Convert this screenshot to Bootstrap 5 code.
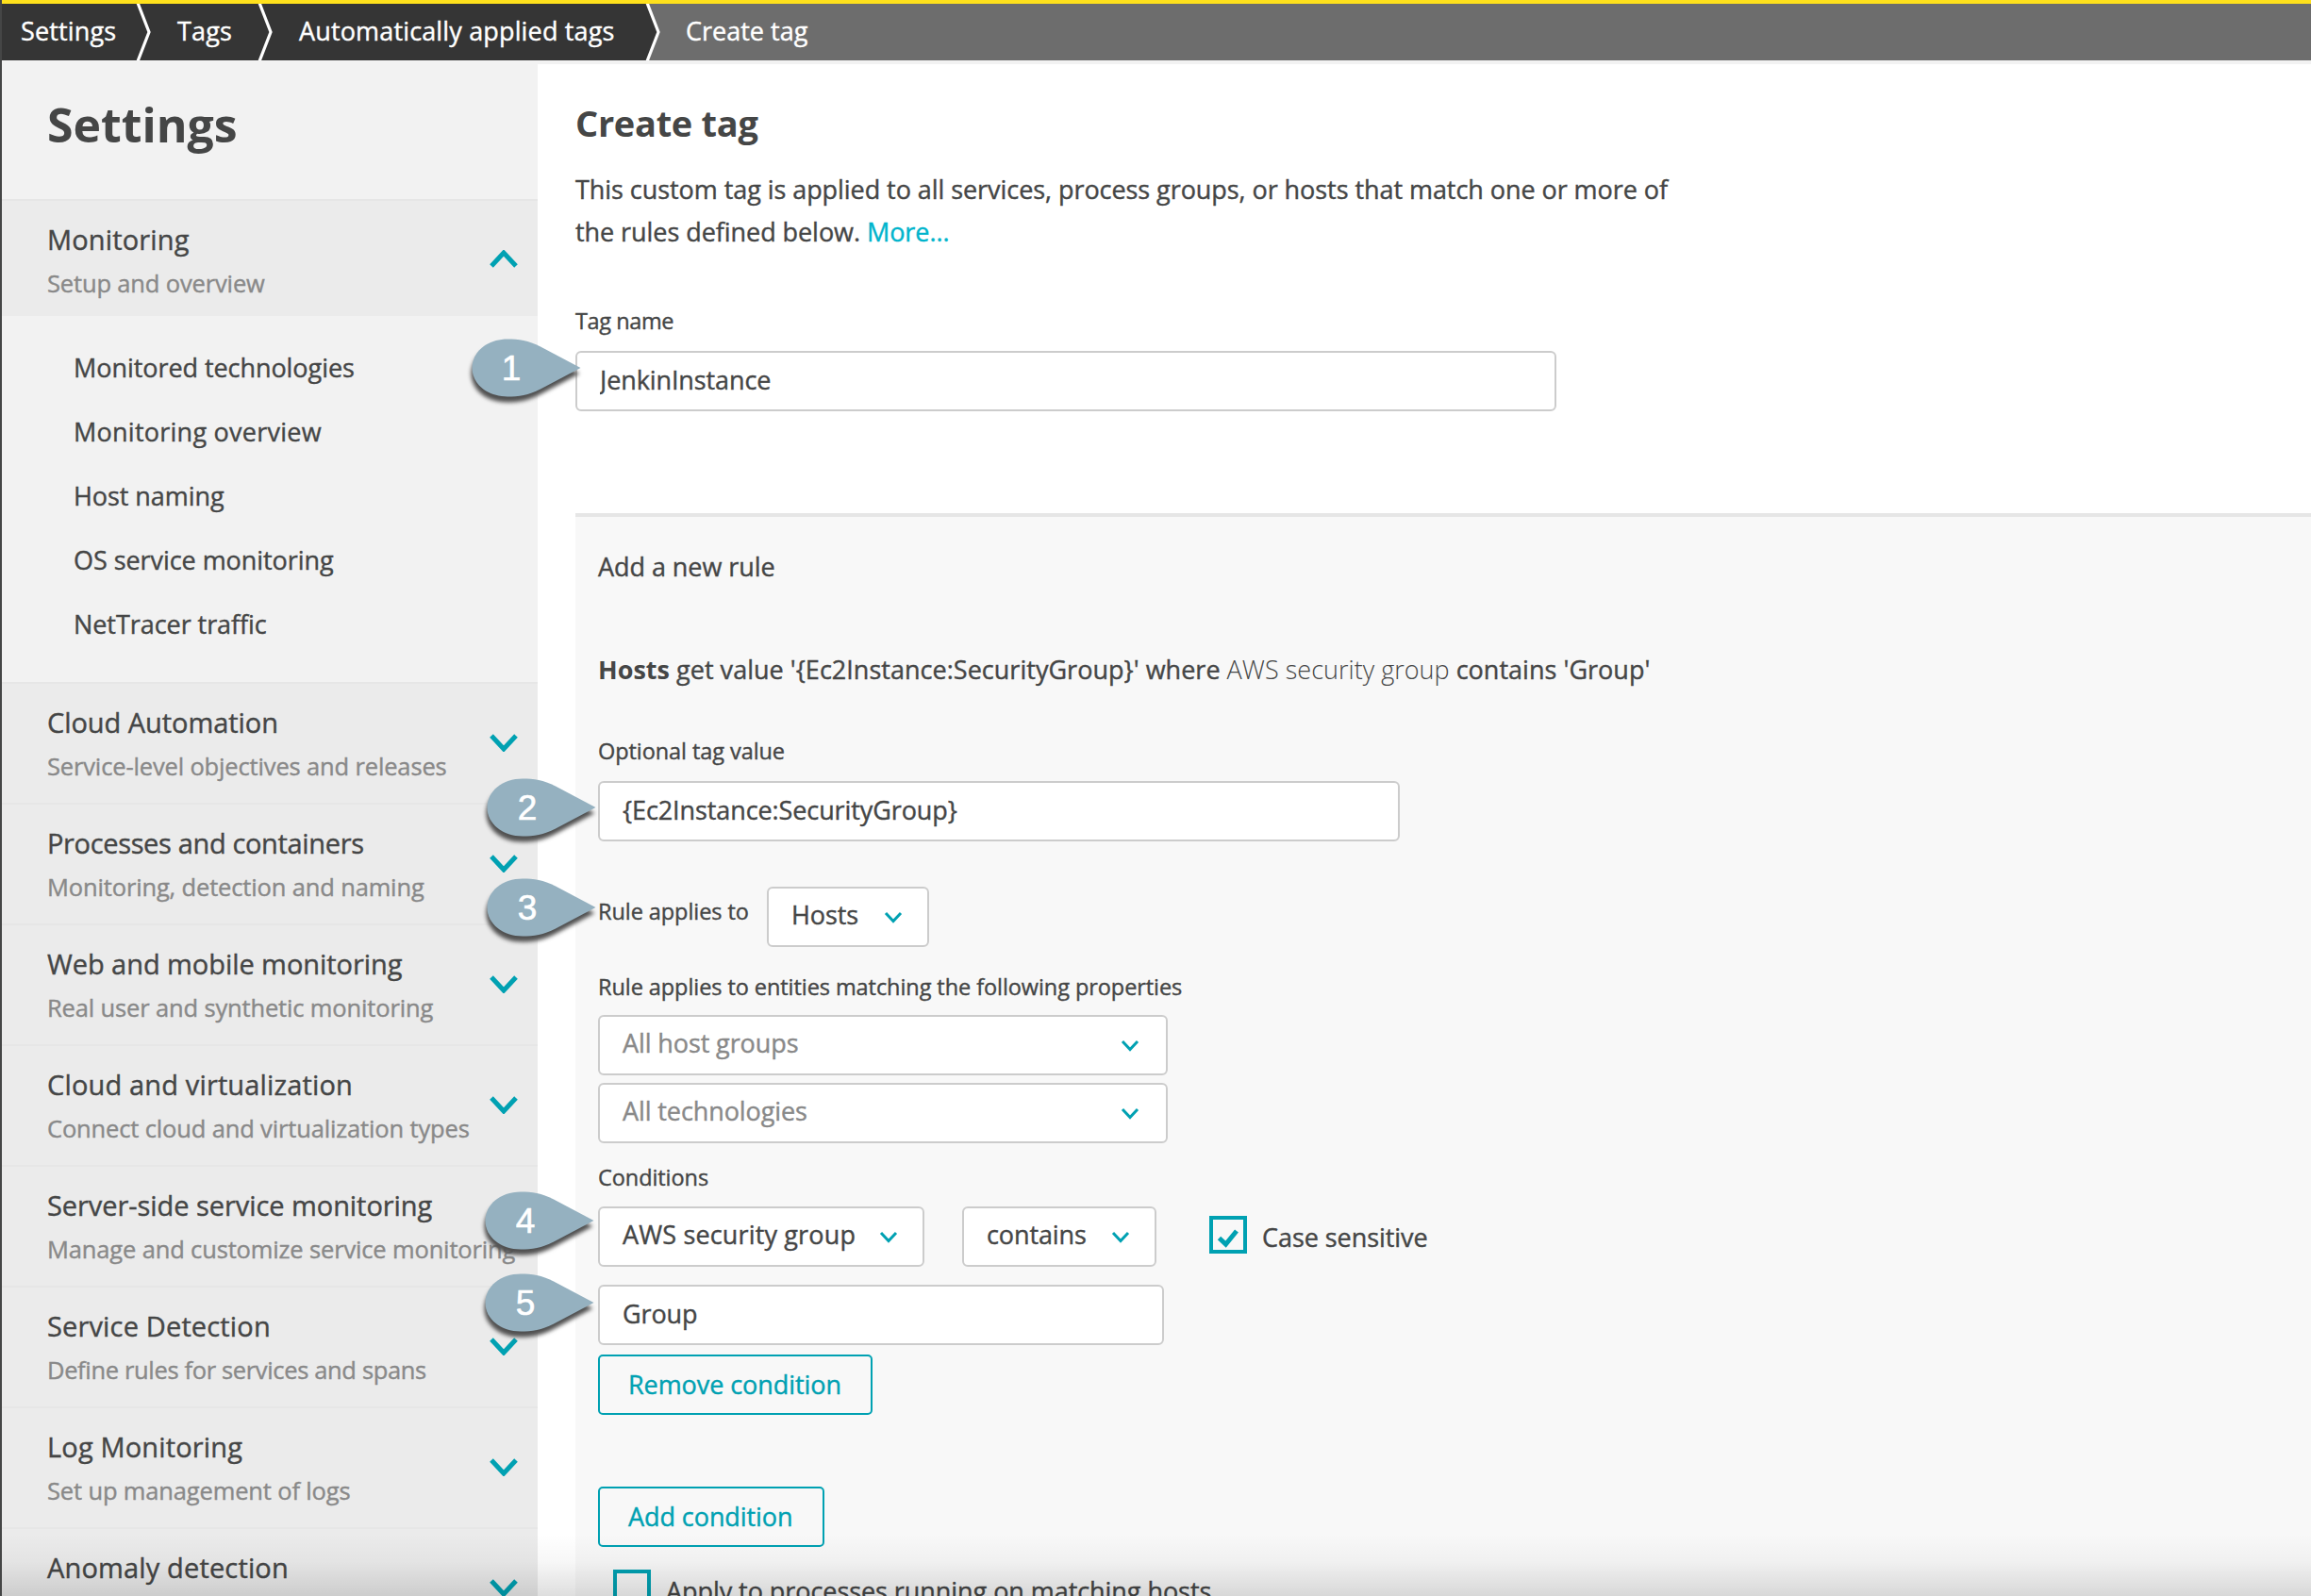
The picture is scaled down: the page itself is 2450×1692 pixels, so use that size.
<!DOCTYPE html>
<html lang="en">
<head>
<meta charset="utf-8">
<title>Create tag - Settings</title>
<link rel="stylesheet" href="https://cdn.jsdelivr.net/npm/bootstrap@5.3.0/dist/css/bootstrap.min.css">
<style>
:root{--ink:#454646;--soft:#898989;--teal:#00a1b2}
body{font-family:"Open Sans",sans-serif;font-size:27px;line-height:45px;letter-spacing:-.06px;color:var(--ink);background:#fff;height:1692px;overflow:hidden;-webkit-text-stroke:.4px}
h1,h2,strong,.fw-light{-webkit-text-stroke:0}
.app{height:1692px;border-left:2px solid #454646;position:relative;overflow:hidden}
.crumbs{height:64px;border-top:4px solid #ffe11c;background:#6d6d6d;color:#fff;line-height:57px;letter-spacing:.15px}
.crumbs a{color:#fff;background:#353535;text-decoration:none;height:60px;white-space:nowrap}
.crumbs svg{width:16px;height:60px;flex:none;display:block}
.c1{width:142px;padding-left:20px}.c2{width:113px;padding-left:28px}.c3{width:395px;padding-left:28px}
.c4{padding-left:27px;letter-spacing:0}
.strip{height:4px;background:#f2f2f2}
.side{width:568px;background:#f2f2f2;flex:none}
.side h1{font-size:50px;font-weight:700;line-height:60px;letter-spacing:0;margin:0;padding:34px 0 49px 48px}
.sec{height:128px;background:#ebebeb;border-top:2px solid #e6e6e6;padding:18px 21px 0 48px;white-space:nowrap}
.sec.open{height:124px}
.sec .ttl{font-size:29px;line-height:45px}
.sec .sub{font-size:25.5px;line-height:48px;letter-spacing:-.15px;color:var(--soft)}
.sec svg{width:30px;height:20px;margin-top:34px;flex:none}
.sec .txt{width:0;flex:1}
.sec .narrow{letter-spacing:-.35px}
.wide{letter-spacing:.15px}
.chev{fill:none;stroke:var(--teal)}
.subnav{padding:21px 0 27px 76px;margin:0;list-style:none}
.subnav li{line-height:68px}
.subnav .wider{letter-spacing:.25px}
.main{padding-left:40px;flex:1;min-width:0}
.main h2{font-size:38px;font-weight:700;line-height:50px;letter-spacing:-.3px;margin:37px 0 0}
.intro{width:1200px;margin:23px 0 56px}
.intro a{color:#00b4cc;text-decoration:none}
.lbl{font-size:23.5px;line-height:32px;letter-spacing:-.07px;margin:0;display:block;white-space:nowrap}
.lbl.tight{letter-spacing:-.4px}
.box,.box:focus{height:64px;border:2px solid #ccc;border-radius:6px;background:#fff;color:var(--ink);font-size:27px;padding:0 26px 4px 24px;letter-spacing:-.1px;line-height:56px;box-shadow:none}
.box.faded{color:var(--soft);padding-right:28px;width:604px}
.box svg{width:20px;height:14px;flex:none;margin-top:4px}
.box-name{width:1040px;margin-top:16px}
.box-value{width:850px;margin-top:16px}
.box-group{width:600px;margin-top:19px}
.box-hosts{width:172px}
.box-attr{width:346px}
.box-op{width:206px;margin-left:40px}
.rule{margin-top:108px;border-top:4px solid #e6e6e6;background:#f8f8f8;padding:30px 0 0 24px;height:1148px}
.rule p{margin:0;white-space:nowrap}
.rule .summary{padding-top:64px;letter-spacing:.02px}
.lbl-value{margin-top:48px}
.applies{margin-top:48px}
.applies .lbl{width:179px;padding-top:10px}
.lbl-match{margin:26px 0 14px}
.lbl-cond{margin:20px 0 15px}
.act{height:64px;border:2px solid var(--teal);border-radius:5px;color:var(--teal);font-size:27px;line-height:60px;padding:0 0 0 30px;text-align:left;letter-spacing:-.07px}
.act-remove{width:291px;margin-top:10px}
.act-add{width:240px;margin-top:76px}
.tick{width:40px;height:40px;border:4px solid var(--teal);flex:none;margin-right:16px}
.tick svg{display:block;width:32px;height:32px}
.case{margin-left:56px;padding-top:10px}
.apply{margin:24px 0 0 16px}
.pin{position:absolute;width:120px;height:72px;overflow:visible}
.pin use{fill:#95b1c0;filter:drop-shadow(-1px 6px 2px #505050)}
.pin text{fill:#fff;stroke:#fff;stroke-width:.6px;-webkit-text-stroke:0;font:37px "Liberation Sans",sans-serif;text-anchor:middle;letter-spacing:0}
.pin-1{left:498px;top:359px}.pin-2{left:514px;top:825px}.pin-3{left:514px;top:931px}.pin-4{left:512px;top:1263px}.pin-5{left:512px;top:1350px}
.fade-end{position:absolute;left:0;right:0;bottom:0;height:66px;background:linear-gradient(rgba(0,0,0,0),rgba(0,0,0,.03) 45%,rgba(0,0,0,.13));pointer-events:none}
</style>
</head>
<body>
<svg width="0" height="0" class="position-absolute">
<symbol id="down" viewBox="0 0 30 20"><path d="M2 3L15 17L28 3" stroke-width="5"/></symbol>
<symbol id="up" viewBox="0 0 30 20"><path d="M2 17L15 3L28 17" stroke-width="5"/></symbol>
<symbol id="small" viewBox="0 0 20 14"><path d="M2 3L10 11.5L18 3" stroke-width="3"/></symbol>
<symbol id="drop" viewBox="0 0 116 62"><path d="M115.500 31L73 8.500C60 2 50 0.500 38 0.500C17 0.500 0.500 13.500 0.500 31S17 61.500 38 61.500C50 61.500 60 60 73 53.500Z"/></symbol>
</svg>
<div class="app">
  <nav class="crumbs d-flex" aria-label="breadcrumb">
    <a href="#" class="c1">Settings</a>
    <svg viewBox="0 0 16 60"><path fill="#353535" d="M0 0h16v60H0z"/><path d="M2 -1L14 30L2 61" fill="none" stroke="#fff" stroke-width="3.2"/></svg>
    <a href="#" class="c2">Tags</a>
    <svg viewBox="0 0 16 60"><path fill="#353535" d="M0 0h16v60H0z"/><path d="M2 -1L14 30L2 61" fill="none" stroke="#fff" stroke-width="3.2"/></svg>
    <a href="#" class="c3">Automatically applied tags</a>
    <svg viewBox="0 0 16 60"><path fill="#353535" d="M0 0h2L14 30L2 60H0z"/><path d="M2 -1L14 30L2 61" fill="none" stroke="#fff" stroke-width="3.2"/></svg>
    <span class="c4">Create tag</span>
  </nav>
  <div class="strip"></div>
  <div class="d-flex">
    <aside class="side">
      <h1>Settings</h1>
      <div class="sec open d-flex"><div class="txt"><div class="ttl wide">Monitoring</div><div class="sub">Setup and overview</div></div><svg class="chev"><use href="#up"/></svg></div>
      <ul class="subnav">
        <li>Monitored technologies</li><li class="wider">Monitoring overview</li><li>Host naming</li><li>OS service monitoring</li><li>NetTracer traffic</li>
      </ul>
      <div class="sec d-flex"><div class="txt"><div class="ttl">Cloud Automation</div><div class="sub">Service-level objectives and releases</div></div><svg class="chev"><use href="#down"/></svg></div>
      <div class="sec d-flex"><div class="txt"><div class="ttl narrow">Processes and containers</div><div class="sub">Monitoring, detection and naming</div></div><svg class="chev"><use href="#down"/></svg></div>
      <div class="sec d-flex"><div class="txt"><div class="ttl">Web and mobile monitoring</div><div class="sub">Real user and synthetic monitoring</div></div><svg class="chev"><use href="#down"/></svg></div>
      <div class="sec d-flex"><div class="txt"><div class="ttl wide">Cloud and virtualization</div><div class="sub">Connect cloud and virtualization types</div></div><svg class="chev"><use href="#down"/></svg></div>
      <div class="sec d-flex"><div class="txt"><div class="ttl">Server-side service monitoring</div><div class="sub">Manage and customize service monitoring</div></div></div>
      <div class="sec d-flex"><div class="txt"><div class="ttl wide">Service Detection</div><div class="sub narrow">Define rules for services and spans</div></div><svg class="chev"><use href="#down"/></svg></div>
      <div class="sec d-flex"><div class="txt"><div class="ttl wide">Log Monitoring</div><div class="sub">Set up management of logs</div></div><svg class="chev"><use href="#down"/></svg></div>
      <div class="sec d-flex"><div class="txt"><div class="ttl wide">Anomaly detection</div></div><svg class="chev"><use href="#down"/></svg></div>
    </aside>
    <main class="main">
      <h2>Create tag</h2>
      <p class="intro">This custom tag is applied to all services, process groups, or hosts that match one or more of<br>the rules defined below. <a href="#">More...</a></p>
      <label class="lbl tight" for="tag">Tag name</label>
      <input id="tag" class="form-control box box-name" value="JenkinInstance">
      <section class="rule">
        <p>Add a new rule</p>
        <p class="summary"><strong>Hosts</strong> get value '{Ec2Instance:SecurityGroup}' where <span class="fw-light">AWS security group</span> contains 'Group'</p>
        <label class="lbl lbl-value" for="val">Optional tag value</label>
        <input id="val" class="form-control box box-value" value="{Ec2Instance:SecurityGroup}">
        <div class="applies d-flex">
          <label class="lbl">Rule applies to</label>
          <div class="box box-hosts d-flex justify-content-between align-items-center">Hosts<svg class="chev"><use href="#small"/></svg></div>
        </div>
        <label class="lbl lbl-match">Rule applies to entities matching the following properties</label>
        <div class="box faded d-flex justify-content-between align-items-center">All host groups<svg class="chev"><use href="#small"/></svg></div>
        <div class="box faded d-flex justify-content-between align-items-center mt-2">All technologies<svg class="chev"><use href="#small"/></svg></div>
        <label class="lbl lbl-cond">Conditions</label>
        <div class="d-flex">
          <div class="box box-attr d-flex justify-content-between align-items-center"><span class="wide">AWS security group</span><svg class="chev"><use href="#small"/></svg></div>
          <div class="box box-op d-flex justify-content-between align-items-center">contains<svg class="chev"><use href="#small"/></svg></div>
          <div class="case d-flex">
            <span class="tick"><svg viewBox="0 0 32 32"><path d="M6.500 19.500L13.500 26L25 12" fill="none" stroke="#00a1b2" stroke-width="5"/></svg></span>
            <span>Case sensitive</span>
          </div>
        </div>
        <input class="form-control box box-group" value="Group" aria-label="Condition value">
        <button class="btn act act-remove d-block">Remove condition</button>
        <button class="btn act act-add d-block">Add condition</button>
        <div class="apply d-flex"><span class="tick"></span><span>Apply to processes running on matching hosts</span></div>
      </section>
    </main>
  </div>
  <svg class="pin pin-1"><use href="#drop" width="116" height="62"/><text x="42" y="44">1</text></svg>
  <svg class="pin pin-2"><use href="#drop" width="116" height="62"/><text x="43" y="44">2</text></svg>
  <svg class="pin pin-3"><use href="#drop" width="116" height="62"/><text x="43" y="44">3</text></svg>
  <svg class="pin pin-4"><use href="#drop" width="116" height="62"/><text x="43" y="44">4</text></svg>
  <svg class="pin pin-5"><use href="#drop" width="116" height="62"/><text x="43" y="44">5</text></svg>
  <div class="fade-end"></div>
</div>
<script src="https://cdn.jsdelivr.net/npm/bootstrap@5.3.0/dist/js/bootstrap.bundle.min.js"></script>
</body>
</html>
